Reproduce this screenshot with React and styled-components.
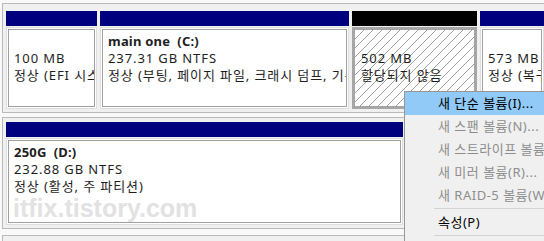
import styled, { createGlobalStyle } from 'styled-components';

const GlobalStyle = createGlobalStyle`
  html, body {
    margin: 0;
    padding: 0;
    overflow: hidden;
    background: #f9f9f9;
  }
  body {
    font-family: "Noto Sans", "Noto Sans CJK KR", sans-serif;
    font-size: 13px;
    color: #1e1e1e;
  }
`;

const topDisk = [
  { width: 91, color: '#00007f', lines: ['', '100 MB', '정상 (EFI 시스템 파티션)'] },
  { width: 249, color: '#00007f', lines: ['main one  (C:)', '237.31 GB NTFS', '정상 (부팅, 페이지 파일, 크래시 덤프, 기본 데이터 파티션)'] },
  { width: 125, color: '#000000', lines: ['', '502 MB', '할당되지 않음'], selected: true },
  { color: '#00007f', lines: ['', '573 MB', '정상 (복구 파티션)'] },
];

const menuItems = [
  { label: '새 단순 볼륨(I)...', active: true },
  { label: '새 스팬 볼륨(N)...', disabled: true },
  { label: '새 스트라이프 볼륨(T)...', disabled: true },
  { label: '새 미러 볼륨(R)...', disabled: true },
  { label: '새 RAID-5 볼륨(W)...', disabled: true },
];

const App = () => {
  return (
    <Screen>
      <GlobalStyle />
      <DiskPanel $padTop={7}>
        <Partitions>
          {topDisk.map((p, i) => (
            <Partition key={i} $width={p.width}>
              <Header $color={p.color} />
              <Frame $selected={p.selected}>
                <Box $h={p.selected ? 76 : 78} $selected={p.selected}>
                  {p.lines.map((l, j) => (
                    <Line key={j} $bold={j === 0}>{l || '\u00a0'}</Line>
                  ))}
                </Box>
              </Frame>
            </Partition>
          ))}
        </Partitions>
      </DiskPanel>

      <DiskPanel $padTop={4}>
        <Partitions>
          <Partition $width={397}>
            <Header $color="#00007f" />
            <Frame>
              <Box $h={83}>
                <Line $bold>250G  (D:)</Line>
                <Line>232.88 GB NTFS</Line>
                <Line>정상 (활성, 주 파티션)</Line>
                <Watermark>itfix.tistory.com</Watermark>
              </Box>
            </Frame>
          </Partition>
        </Partitions>
      </DiskPanel>
      <NextPanel />

      <Menu>
        {menuItems.map((m) => (
          <MenuItem key={m.label} $active={m.active} $disabled={m.disabled}>
            {m.label}
          </MenuItem>
        ))}
        <Separator />
        <MenuItem>속성(P)</MenuItem>
        <Separator />
        <MenuItem>도움말(H)</MenuItem>
      </Menu>
    </Screen>
  );
};

export default App;

const Screen = styled.div`
  position: relative;
  width: 544px;
  height: 241px;
  overflow: hidden;
  box-sizing: border-box;
  padding: 3px 0 0 2px;
`;

const DiskPanel = styled.div`
  border-top: 1px solid #b9b9b9;
  border-left: 1px solid #b9b9b9;
  border-bottom: 1px solid #b9b9b9;
  background: #f0f0f0;
  padding: ${(p) => p.$padTop}px 0 3px 3px;
  margin-bottom: 4px;
`;

const NextPanel = styled.div`
  margin-top: 6px;
  height: 10px;
  border-top: 1px solid #b9b9b9;
  border-left: 1px solid #b9b9b9;
  background: #f0f0f0;
`;

const Partitions = styled.div`
  display: flex;
  gap: 3px;
`;

const Partition = styled.div`
  flex: ${(p) => (p.$width ? `0 0 ${p.$width}px` : '1 1 auto')};
  min-width: 0;
  display: flex;
  flex-direction: column;
`;

const Header = styled.div`
  height: 15px;
  background: ${(p) => p.$color};
`;

const Frame = styled.div`
  margin-top: 1px;
  border: ${(p) => (p.$selected ? '3px solid #a6a6a6' : '1px solid #dedede')};
  padding: ${(p) => (p.$selected ? '0' : '1px')};
  background: ${(p) =>
    p.$selected
      ? 'repeating-linear-gradient(135deg, #fff 0 5.7px, #a0a0a0 5.7px 6.4px)'
      : '#fff'};
`;

const Box = styled.div`
  box-sizing: border-box;
  height: ${(p) => p.$h}px;
  border: ${(p) => (p.$selected ? 'none' : '1px solid #a0a0a0')};
  padding: ${(p) => (p.$selected ? '3px 6px' : '3px 5px')};
  overflow: hidden;
  line-height: 17px;
`;

const Line = styled.div`
  white-space: pre;
  font-weight: ${(p) => (p.$bold ? 700 : 400)};
  letter-spacing: ${(p) => (p.$bold ? '0.2px' : '0.9px')};
`;

const Watermark = styled.div`
  margin-top: 0;
  margin-left: -1px;
  font-family: "Liberation Sans", sans-serif;
  font-weight: 700;
  font-size: 25px;
  line-height: 26px;
  color: #e2e2e2;
  white-space: nowrap;
`;

const Menu = styled.div`
  position: absolute;
  left: 404px;
  top: 91px;
  width: 160px;
  background: #f0f0f0;
  border: 1px solid #979797;
  font-size: 13px;
  letter-spacing: 0.5px;
`;

const MenuItem = styled.div`
  height: 23px;
  line-height: 23px;
  padding-left: 33px;
  white-space: nowrap;
  color: ${(p) => (p.$disabled ? '#8d8d8d' : '#000')};
  background: ${(p) => (p.$active ? '#91c9f7' : 'transparent')};
`;

const Separator = styled.div`
  height: 1px;
  margin: 1px 0 2px 29px;
  background: #d4d4d4;
`;
